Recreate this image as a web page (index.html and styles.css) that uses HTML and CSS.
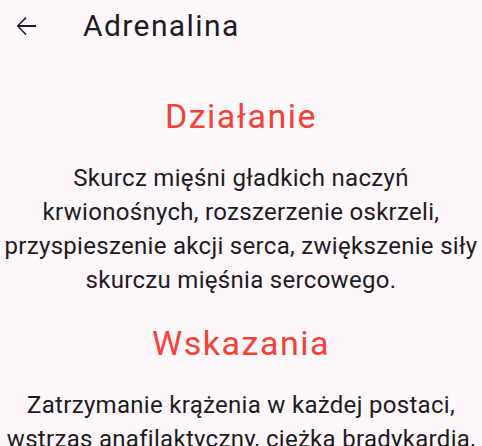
FILE: index.html
```html
<!DOCTYPE html>
<html lang="pl">
<head>
<meta charset="utf-8">
<link rel="stylesheet" href="styles.css">
</head>
<body>
<header class="appbar">
  <svg class="back" viewBox="0 0 24 24" width="30" height="30"><path d="M20 11.25H6.9l5.55-5.55-.9-.9L4.5 12l7.05 7.2.9-.9-5.55-5.55H20z" fill="#1d1b20"/></svg>
  <h1 class="title">Adrenalina</h1>
</header>
<main class="content">
  <h2 class="heading">Działanie</h2>
  <p class="body">Skurcz mięśni gładkich naczyń krwionośnych, rozszerzenie oskrzeli, przyspieszenie akcji serca, zwiększenie siły skurczu mięśnia sercowego.</p>
  <h2 class="heading">Wskazania</h2>
  <p class="body">Zatrzymanie krążenia w każdej postaci, wstrząs anafilaktyczny, ciężka bradykardia, stan astmatyczny.</p>
</main>
</body>
</html>
```
FILE: styles.css
```css
html, body {
  margin: 0;
  padding: 0;
  background: #fef7fc;
  font-family: Roboto, "Noto Sans", sans-serif;
  color: #1d1b20;
  overflow: hidden;
}
.appbar {
  display: flex;
  align-items: center;
  height: 52px;
  padding-left: 11px;
}
.back {
  display: block;
}
.title {
  margin: 0 0 0 42px;
  font-size: 30px;
  line-height: 40px;
  letter-spacing: 1.4px;
  font-weight: 400;
}
.content {
  display: flex;
  flex-direction: column;
  align-items: center;
  text-align: center;
  padding: 18px 2px 0;
}
.heading {
  margin: 24px 0 0;
  font-size: 34px;
  line-height: 44px;
  letter-spacing: 1.5px;
  font-weight: 400;
  color: #f44336;
}
.body {
  margin: 23px 0 0;
  font-size: 24px;
  line-height: 34px;
  letter-spacing: 0.3px;
}
```
